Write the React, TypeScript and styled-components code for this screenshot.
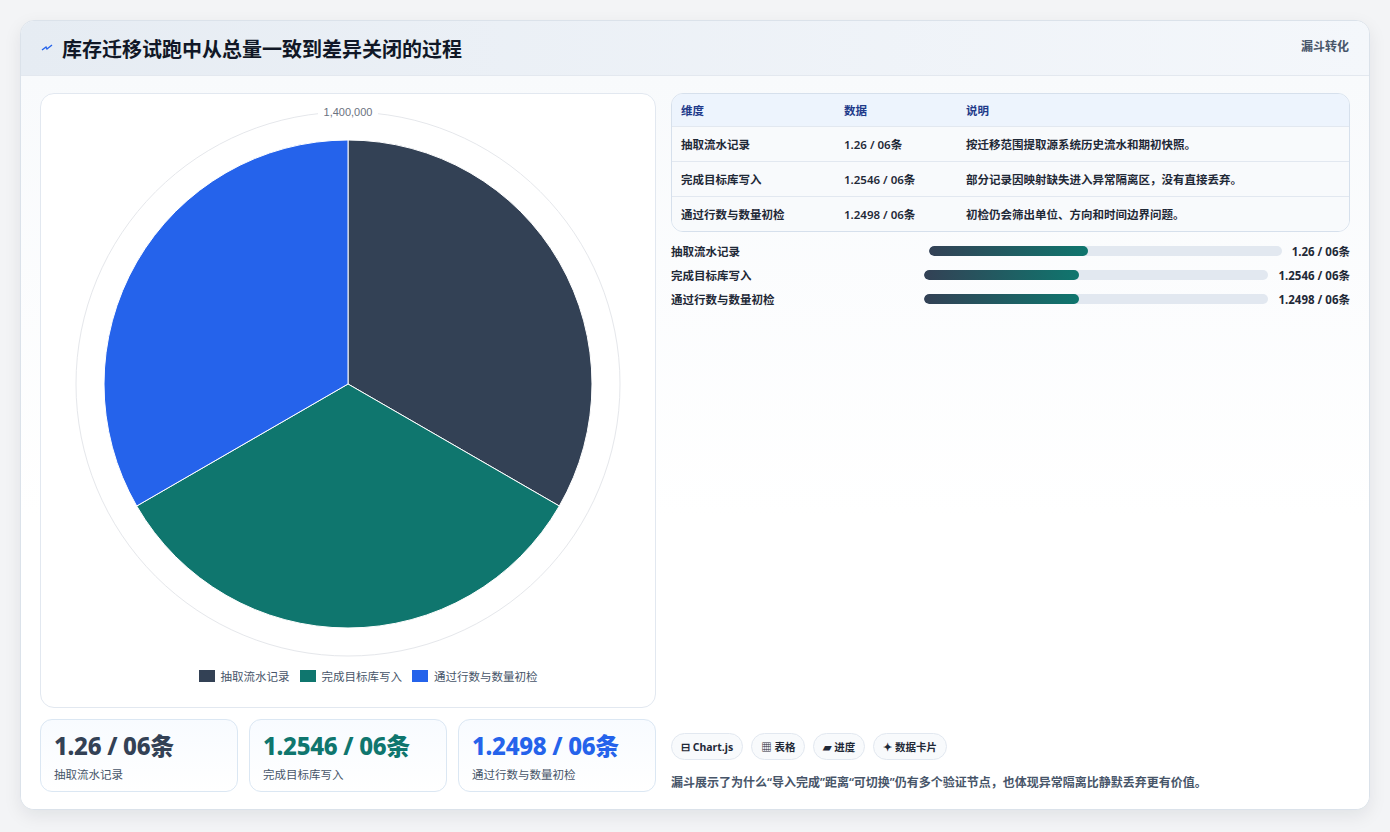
import React from "react";
import styled, { createGlobalStyle } from "styled-components";

const Global = createGlobalStyle`
  html, body { margin: 0; padding: 0; background: #f3f4f6; }
  body { font-family: "Noto Sans", "Noto Sans CJK SC", sans-serif; color: #1e293b; }
`;

const Page = styled.div`
  width: 1390px; height: 832px; box-sizing: border-box; padding: 20px 20px 0 20px;
`;
const Card = styled.div`
  width: 1350px; height: 790px; box-sizing: border-box; background: #fff;
  border: 1px solid #dbe2ea; border-radius: 14px; overflow: hidden;
  box-shadow: 0 6px 18px rgba(15,23,42,0.08); display: flex; flex-direction: column;
`;
const Header = styled.div`
  height: 55px; flex: none; box-sizing: border-box; padding: 0 20px;
  display: flex; align-items: center; justify-content: space-between;
  background: linear-gradient(90deg, #e6ecf3, #f4f7fb); border-bottom: 1px solid #e3e8ef;
`;
const Title = styled.h1`
  margin: 0; font-size: 20px; font-weight: 700; color: #111827; display: flex; align-items: center; gap: 9px;
`;
const Badge = styled.span`
  align-self: flex-start; margin-top: 16px; font-size: 12px; font-weight: 700; color: #475569;
`;
const Body = styled.div`
  flex: 1; display: flex; gap: 15px; padding: 17px 19px 18px 19px; box-sizing: border-box;
  background: linear-gradient(180deg, #f8fafc, #ffffff 60%);
`;
const Left = styled.div`
  width: 616px; display: flex; flex-direction: column; gap: 11px;
`;
const ChartPanel = styled.div`
  height: 615px; box-sizing: border-box; border: 1px solid #e2e8f0; border-radius: 14px; background: #fff;
  display: flex; flex-direction: column; align-items: center;
`;
const Legend = styled.div`
  display: flex; gap: 10px; font-size: 11.5px; color: #475569; margin-top: 2px; margin-left: 40px;
`;
const LegendItem = styled.span`
  display: flex; align-items: center; gap: 6px;
`;
const Swatch = styled.span<{ c: string }>`
  width: 16px; height: 12px; background: ${p => p.c}; display: inline-block;
`;
const Kpis = styled.div`
  display: flex; gap: 11px;
`;
const Kpi = styled.div`
  flex: 1; height: 73px; box-sizing: border-box; border: 1px solid #dbe7f3; border-radius: 12px;
  background: linear-gradient(180deg, #f8fbff, #ffffff); padding: 10px 13px;
  display: flex; flex-direction: column; gap: 4px;
`;
const KpiValue = styled.div<{ c: string }>`
  font-size: 24px; font-weight: 800; color: ${p => p.c}; line-height: 32px; letter-spacing: -0.3px;
`;
const KpiLabel = styled.div`
  font-size: 11.5px; color: #475569;
`;
const Right = styled.div`
  flex: 1; display: flex; flex-direction: column;
`;
const Table = styled.div`
  border: 1px solid #d6e0ec; border-radius: 12px; overflow: hidden; font-size: 11.5px;
`;
const Row = styled.div<{ head?: boolean }>`
  display: grid; grid-template-columns: 163px 122px 1fr; padding: 0 9px;
  height: ${p => (p.head ? 32 : 34)}px; align-items: center;
  background: ${p => (p.head ? "#edf4fd" : "#f8fafc")};
  color: ${p => (p.head ? "#1e3a8a" : "#1f2937")}; font-weight: ${p => (p.head ? 700 : 600)};
  border-top: ${p => (p.head ? "none" : "1px solid #e2e8f0")};
`;
const Bars = styled.div`
  display: flex; flex-direction: column; gap: 5px; margin-top: 9px; font-size: 11.5px; font-weight: 600;
`;
const BarRow = styled.div`
  display: flex; align-items: center; gap: 10px; height: 19px;
`;
const BarLabel = styled.div`flex: 1; color: #1f2937;`;
const Track = styled.div`
  flex: 1.42; height: 10px; border-radius: 5px; background: #e2e8f0; overflow: hidden;
`;
const Fill = styled.div`
  height: 100%; border-radius: 5px; background: linear-gradient(90deg, #334155, #0f766e);
`;
const BarValue = styled.div`font-weight: 700; color: #1f2937;`;
const Spacer = styled.div`flex: 1;`;
const Chips = styled.div`display: flex; gap: 8px;`;
const Chip = styled.span`
  height: 27px; box-sizing: border-box; padding: 0 9px; border: 1px solid #e2e8f0; border-radius: 14px;
  background: #f8fafc; font-size: 10.5px; font-weight: 700; color: #1f2937; display: flex; align-items: center;
`;
const Note = styled.p`
  margin: 13px 0 1px; font-size: 12px; font-weight: 600; color: #475569;
`;

const C = 307, CY = 290, R = 244;
const pt = (a: number) => {
  const r = (a * Math.PI) / 180;
  return `${C + R * Math.cos(r)} ${CY + R * Math.sin(r)}`;
};
const slice = (a: number, b: number) => `M${C} ${CY} L${pt(a)} A${R} ${R} 0 0 1 ${pt(b)} Z`;

const items = [
  { n: "抽取流水记录", v: "1.26 / 06条", d: "按迁移范围提取源系统历史流水和期初快照。", c: "#334155", w: 45 },
  { n: "完成目标库写入", v: "1.2546 / 06条", d: "部分记录因映射缺失进入异常隔离区，没有直接丢弃。", c: "#0f766e", w: 45 },
  { n: "通过行数与数量初检", v: "1.2498 / 06条", d: "初检仍会筛出单位、方向和时间边界问题。", c: "#2563eb", w: 45 },
];

export default function App() {
  return (
    <Page>
      <Global />
      <Card>
        <Header>
          <Title>
            <svg width="12" height="10" viewBox="0 0 12 10"><path d="M1 7 L5 4 L6 6 L11 2" stroke="#2563eb" strokeWidth="1.4" fill="none" /></svg>
            库存迁移试跑中从总量一致到差异关闭的过程
          </Title>
          <Badge>漏斗转化</Badge>
        </Header>
        <Body>
          <Left>
            <ChartPanel>
              <svg width="614" height="572" viewBox="0 0 614 572">
                <circle cx={C} cy={CY} r={272} fill="none" stroke="#e5e7eb" />
                <rect x={C - 30} y={CY - 280} width={60} height={14} fill="#fff" />
                <text x={C} y={CY - 268} textAnchor="middle" fontSize="11" fill="#6b7280" fontFamily="Liberation Sans, sans-serif">1,400,000</text>
                <path d={slice(-90, 30)} fill="#334155" stroke="#fff" strokeWidth="1" />
                <path d={slice(30, 150)} fill="#0f766e" stroke="#fff" strokeWidth="1" />
                <path d={slice(150, 270)} fill="#2563eb" stroke="#fff" strokeWidth="1" />
              </svg>
              <Legend>
                {items.map(i => (
                  <LegendItem key={i.n}><Swatch c={i.c} />{i.n}</LegendItem>
                ))}
              </Legend>
            </ChartPanel>
            <Kpis>
              {items.map(i => (
                <Kpi key={i.n}>
                  <KpiValue c={i.c}>{i.v}</KpiValue>
                  <KpiLabel>{i.n}</KpiLabel>
                </Kpi>
              ))}
            </Kpis>
          </Left>
          <Right>
            <Table>
              <Row head><span>维度</span><span>数据</span><span>说明</span></Row>
              {items.map(i => (
                <Row key={i.n}><span>{i.n}</span><span>{i.v}</span><span>{i.d}</span></Row>
              ))}
            </Table>
            <Bars>
              {items.map(i => (
                <BarRow key={i.n}>
                  <BarLabel>{i.n}</BarLabel>
                  <Track><Fill style={{ width: `${i.w}%` }} /></Track>
                  <BarValue>{i.v}</BarValue>
                </BarRow>
              ))}
            </Bars>
            <Spacer />
            <Chips>
              <Chip>⊟ Chart.js</Chip>
              <Chip>▦ 表格</Chip>
              <Chip>▰ 进度</Chip>
              <Chip>✦ 数据卡片</Chip>
            </Chips>
            <Note>漏斗展示了为什么“导入完成”距离“可切换”仍有多个验证节点，也体现异常隔离比静默丢弃更有价值。</Note>
          </Right>
        </Body>
      </Card>
    </Page>
  );
}
